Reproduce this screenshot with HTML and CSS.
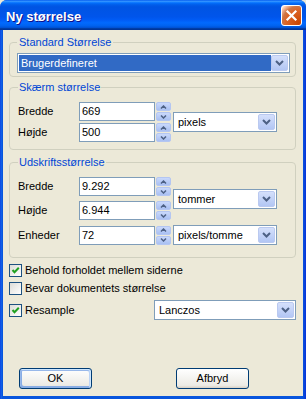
FILE: index.html
```html
<!DOCTYPE html>
<html>
<head>
<meta charset="utf-8">
<link rel="stylesheet" href="styles.css">
</head>
<body>
<div class="window">
  <div class="titlebar">
    <span class="title">Ny størrelse</span>
    <span class="close"><svg width="13" height="13" viewBox="0 0 13 13"><path d="M2.5 2.5 L10.5 10.5 M10.5 2.5 L2.5 10.5" stroke="#fff" stroke-width="2.2" stroke-linecap="square"/></svg></span>
  </div>
  <div class="client">
    <fieldset class="group g1">
      <legend>Standard Størrelse</legend>
      <div class="combo wide">
        <span class="val sel">Brugerdefineret</span>
        <span class="arrow"><svg width="9" height="6" viewBox="0 0 9 6"><path d="M1 1 L4.5 4.5 L8 1" stroke="#4D6185" stroke-width="2" fill="none"/></svg></span>
      </div>
    </fieldset>

    <fieldset class="group g2">
      <legend>Skærm størrelse</legend>
      <div class="grid grid2">
        <span class="lbl">Bredde</span>
        <div class="num"><span class="input">669</span><span class="spin"><span class="sb"><svg width="7" height="4" viewBox="0 0 7 4"><path d="M1 3.5 L3.5 1 L6 3.5" stroke="#4D6185" stroke-width="1.5" fill="none"/></svg></span><span class="sb"><svg width="7" height="4" viewBox="0 0 7 4"><path d="M1 0.5 L3.5 3 L6 0.5" stroke="#4D6185" stroke-width="1.5" fill="none"/></svg></span></span></div>
        <div class="combo unit span2"><span class="val">pixels</span><span class="arrow"><svg width="9" height="6" viewBox="0 0 9 6"><path d="M1 1 L4.5 4.5 L8 1" stroke="#4D6185" stroke-width="2" fill="none"/></svg></span></div>
        <span class="lbl">Højde</span>
        <div class="num"><span class="input">500</span><span class="spin"><span class="sb"><svg width="7" height="4" viewBox="0 0 7 4"><path d="M1 3.5 L3.5 1 L6 3.5" stroke="#4D6185" stroke-width="1.5" fill="none"/></svg></span><span class="sb"><svg width="7" height="4" viewBox="0 0 7 4"><path d="M1 0.5 L3.5 3 L6 0.5" stroke="#4D6185" stroke-width="1.5" fill="none"/></svg></span></span></div>
      </div>
    </fieldset>

    <fieldset class="group g3">
      <legend>Udskriftsstørrelse</legend>
      <div class="grid grid3">
        <span class="lbl">Bredde</span>
        <div class="num"><span class="input">9.292</span><span class="spin"><span class="sb"><svg width="7" height="4" viewBox="0 0 7 4"><path d="M1 3.5 L3.5 1 L6 3.5" stroke="#4D6185" stroke-width="1.5" fill="none"/></svg></span><span class="sb"><svg width="7" height="4" viewBox="0 0 7 4"><path d="M1 0.5 L3.5 3 L6 0.5" stroke="#4D6185" stroke-width="1.5" fill="none"/></svg></span></span></div>
        <div class="combo unit span2"><span class="val">tommer</span><span class="arrow"><svg width="9" height="6" viewBox="0 0 9 6"><path d="M1 1 L4.5 4.5 L8 1" stroke="#4D6185" stroke-width="2" fill="none"/></svg></span></div>
        <span class="lbl">Højde</span>
        <div class="num"><span class="input">6.944</span><span class="spin"><span class="sb"><svg width="7" height="4" viewBox="0 0 7 4"><path d="M1 3.5 L3.5 1 L6 3.5" stroke="#4D6185" stroke-width="1.5" fill="none"/></svg></span><span class="sb"><svg width="7" height="4" viewBox="0 0 7 4"><path d="M1 0.5 L3.5 3 L6 0.5" stroke="#4D6185" stroke-width="1.5" fill="none"/></svg></span></span></div>
        <span class="lbl">Enheder</span>
        <div class="num"><span class="input">72</span><span class="spin"><span class="sb"><svg width="7" height="4" viewBox="0 0 7 4"><path d="M1 3.5 L3.5 1 L6 3.5" stroke="#4D6185" stroke-width="1.5" fill="none"/></svg></span><span class="sb"><svg width="7" height="4" viewBox="0 0 7 4"><path d="M1 0.5 L3.5 3 L6 0.5" stroke="#4D6185" stroke-width="1.5" fill="none"/></svg></span></span></div>
        <div class="combo unit"><span class="val">pixels/tomme</span><span class="arrow"><svg width="9" height="6" viewBox="0 0 9 6"><path d="M1 1 L4.5 4.5 L8 1" stroke="#4D6185" stroke-width="2" fill="none"/></svg></span></div>
      </div>
    </fieldset>

    <div class="checks">
      <div class="chk"><span class="box"><svg width="11" height="11" viewBox="0 0 11 11"><path d="M2.5 5 L4.5 7.2 L8.8 2.8" stroke="#21A121" stroke-width="2" fill="none"/></svg></span><span>Behold forholdet mellem siderne</span></div>
      <div class="chk"><span class="box"></span><span>Bevar dokumentets størrelse</span></div>
      <div class="chk resrow">
        <span class="box"><svg width="11" height="11" viewBox="0 0 11 11"><path d="M2.5 5 L4.5 7.2 L8.8 2.8" stroke="#21A121" stroke-width="2" fill="none"/></svg></span><span>Resample</span>
        <div class="combo lanczos"><span class="val">Lanczos</span><span class="arrow"><svg width="9" height="6" viewBox="0 0 9 6"><path d="M1 1 L4.5 4.5 L8 1" stroke="#4D6185" stroke-width="2" fill="none"/></svg></span></div>
      </div>
    </div>

    <div class="buttons">
      <span class="btn default">OK</span>
      <span class="btn">Afbryd</span>
    </div>
  </div>
</div>
</body>
</html>
```

FILE: styles.css
```css
* { box-sizing: border-box; }
html, body { margin: 0; padding: 0; }
body {
  width: 306px;
  height: 399px;
  overflow: hidden;
  font-family: "Liberation Sans", Arial, sans-serif;
  font-size: 11px;
  color: #000;
  background: #ECE9D8;
}
.window {
  width: 306px;
  height: 399px;
  display: flex;
  flex-direction: column;
  background: linear-gradient(to right, #0831D9 0, #166AEE 1px, #0855DD 2px, #0855DD 303px, #0831D9 306px);
  border-radius: 7px 7px 0 0;
  overflow: hidden;
}
.titlebar {
  height: 30px;
  flex: none;
  display: flex;
  align-items: flex-start;
  background: linear-gradient(to bottom, #0058EE 0%, #3593FF 4%, #288EFF 6%, #127DFF 8%, #036FFC 10%, #0262EE 14%, #0057E5 20%, #0054E3 24%, #0055EB 56%, #005BF5 66%, #026AFE 76%, #0062EF 86%, #0052D6 92%, #0040AB 94%, #003092 100%);
}
.title {
  font-weight: bold;
  font-size: 13px;
  line-height: 24px;
  padding-top: 5px;
  padding-left: 6px;
  color: #fff;
  text-shadow: 1px 1px #0F1089;
}
.close {
  margin-left: auto;
  margin-right: 4px;
  margin-top: 5px;
  width: 21px;
  height: 21px;
  border: 1px solid #fff;
  border-radius: 3px;
  background: radial-gradient(circle at 90% 90%, #cc4600 0%, #dc6527 55%, #cd7546 70%, #ffccb2 90%, #fff 100%);
  display: flex;
  align-items: center;
  justify-content: center;
}
.client {
  flex: 1;
  margin: 0 3px 3px 3px;
  background: #ECE9D8;
  display: flex;
  flex-direction: column;
  padding: 6px 7px 7px 6px;
}
.group {
  margin: 0;
  border: 1px solid #D0D0BF;
  border-radius: 4px;
  min-width: 0;
}
.group legend {
  color: #0046D5;
  line-height: 13px;
  padding: 0 1px;
}
.g1 { padding: 4px 5px 3px 7px; }
.g1 legend { padding: 0 2px; }
.g2 { margin-top: 4px; padding: 8px 6px 7px 8px; }
.g3 { margin-top: 6px; padding: 8px 6px 12px 8px; }

.grid {
  display: grid;
  grid-template-columns: 59px 92px 104px;
  column-gap: 2px;
  align-items: center;
}
.grid2 { row-gap: 2px; }
.grid3 { row-gap: 5px; }
.span2 { grid-column: 3; }
.grid2 .span2 { grid-row: 1 / span 2; }
.grid3 .span2 { grid-row: 1 / span 2; }
.lbl { line-height: 19px; }
.num { display: flex; height: 19px; width: 92px; }
.input {
  width: 76px;
  flex: none;
  height: 19px;
  border: 1px solid #7F9DB9;
  background: #fff;
  padding-left: 2px;
  line-height: 17px;
}
.spin {
  margin-left: 1px;
  width: 15px;
  flex: none;
  height: 19px;
  display: flex;
  flex-direction: column;
  gap: 1px;
}
.sb {
  flex: 1;
  width: 15px;
  display: flex;
  align-items: center;
  justify-content: center;
  border: 1px solid #B4C6F2;
  border-radius: 2px;
  background: linear-gradient(#C9D8FB, #A9C0F2);
}
.combo {
  display: flex;
  height: 20px;
  border: 1px solid #7F9DB9;
  background: #fff;
  padding: 1px;
}
.combo .val {
  flex: 1;
  line-height: 16px;
  padding-left: 3px;
  white-space: nowrap;
  overflow: hidden;
}
.combo .val.sel {
  background: #316AC5;
  color: #fff;
  padding-left: 2px;
}
.combo .arrow {
  width: 17px;
  flex: none;
  display: flex;
  align-items: center;
  justify-content: center;
  border: 1px solid #BAC9F0;
  border-radius: 2px;
  background: linear-gradient(#D5E0FB, #B2C6F4);
}
.combo.wide { width: 273px; }
.combo.unit { width: 104px; }
.checks {
  margin-top: 6px;
  display: flex;
  flex-direction: column;
  gap: 5px;
}
.chk {
  display: flex;
  align-items: center;
  height: 13px;
  gap: 3px;
  line-height: 13px;
}
.chk.resrow { height: 20px; }
.box {
  width: 13px;
  height: 13px;
  flex: none;
  border: 1px solid #1C5180;
  background: linear-gradient(135deg, #DCDCD7, #fff);
  display: flex;
  align-items: center;
  justify-content: center;
}
.combo.lanczos {
  margin-left: auto;
  width: 142px;
}
.buttons {
  margin-top: auto;
  display: flex;
  padding-left: 10px;
  gap: 84px;
}
.btn {
  width: 73px;
  height: 21px;
  border: 1px solid #003C74;
  border-radius: 3px;
  background: linear-gradient(180deg, #fff, #ECEBE5 86%, #D8D0C4);
  text-align: center;
  line-height: 19px;
}
.btn.default {
  box-shadow: inset -1px 1px #CEE7FF, inset 1px 2px #98B8EA, inset -2px 2px #BCD4F6, inset 1px -1px #89ADE4, inset 2px -2px #89ADE4;
}
```
